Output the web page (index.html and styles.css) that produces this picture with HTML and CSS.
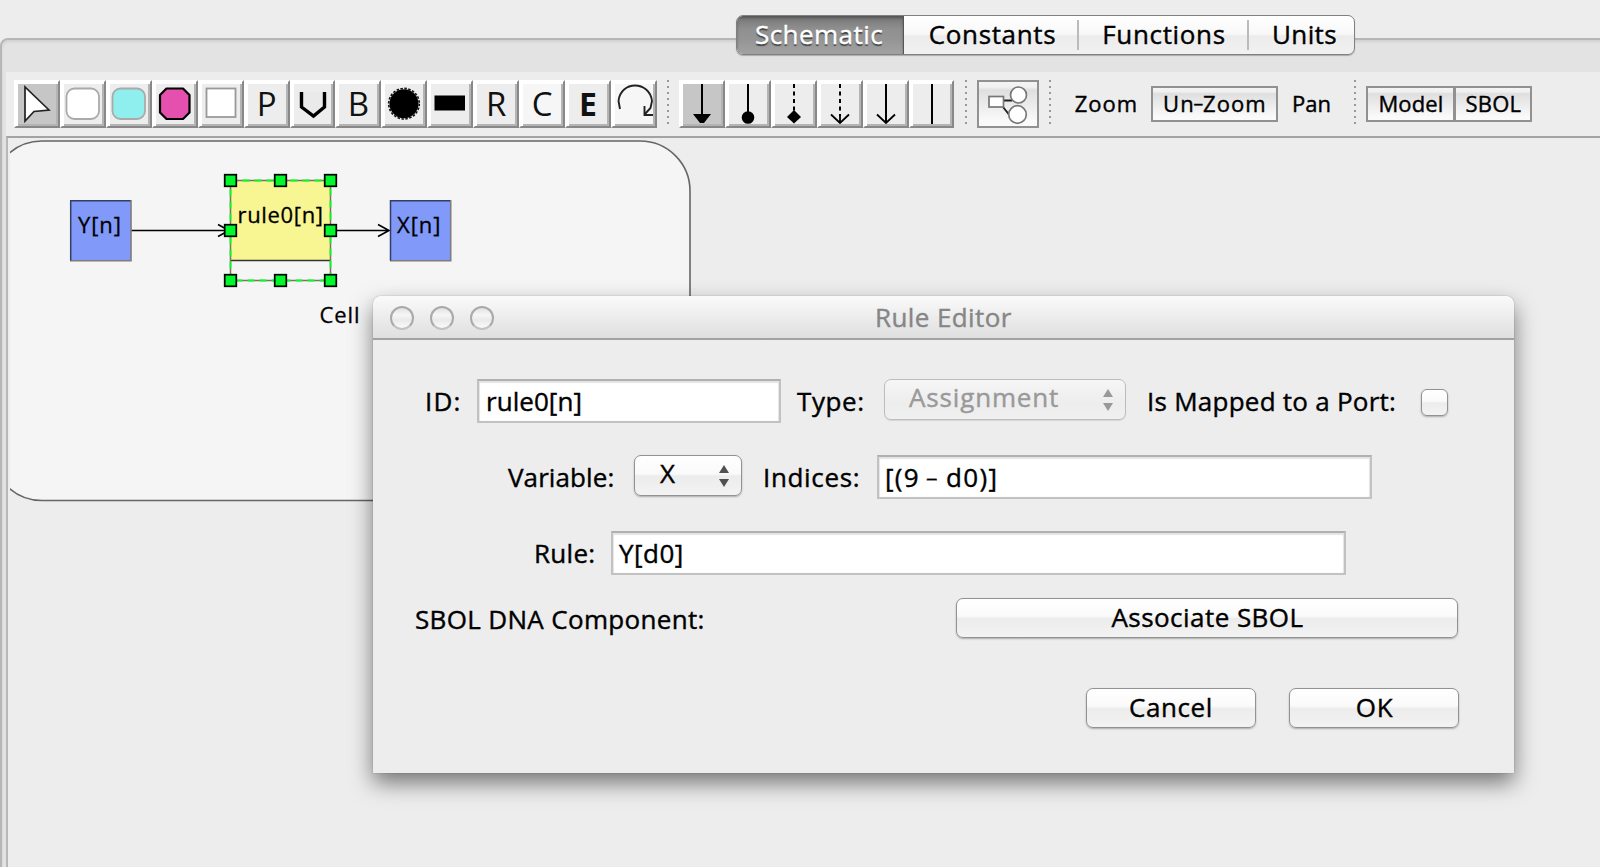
FILE: index.html
```html
<!DOCTYPE html>
<html lang="en">

<head>
  <meta charset="UTF-8" />
  <meta name="viewport" content="width=device-width, initial-scale=1.0" />
  <title>Schematic</title>
  <link rel="stylesheet" href="styles.css">
</head>

<body>

  <!-- Tabs -->
  <nav class="tabs">
    <button class="tab tab-schematic active">Schematic</button>
    <button class="tab tab-constants">Constants</button>
    <button class="tab tab-functions">Functions</button>
    <button class="tab tab-units">Units</button>
  </nav>

  <div class="pane">
    <div class="pane-inner">

      <!-- Toolbar -->
      <div class="toolbar">
        <div class="tool-group">
          <button class="tool selected"><svg viewBox="0 0 38 40"><path d="M7 3V37L16 27.5L31 26Z" fill="#fff" stroke="#222" stroke-width="1.7"/></svg></button>
          <button class="tool"><svg viewBox="0 0 38 40"><rect x="2.500" y="4.500" width="32.500" height="30.500" rx="8" fill="#fff" stroke="#aaa" stroke-width="1.800"/></svg></button>
          <button class="tool"><svg viewBox="0 0 38 40"><rect x="2.500" y="4.500" width="32.500" height="30.500" rx="8" fill="#8eefee" stroke="#aaa" stroke-width="1.800"/></svg></button>
          <button class="tool"><svg viewBox="0 0 38 40"><path d="M10.500 4.500H27L33.500 11V28.500L27 35H10.500L4 28.500V11Z" fill="#e550ae" stroke="#000" stroke-width="2.200" stroke-linejoin="round"/></svg></button>
          <button class="tool"><svg viewBox="0 0 38 40"><rect x="4.500" y="4.500" width="29" height="28.500" fill="#fff" stroke="#999" stroke-width="1.800"/></svg></button>
          <button class="tool letter">P</button>
          <button class="tool"><svg viewBox="0 0 38 40"><path d="M7.500 8V23L19.500 32L30.500 23V8" fill="#eaeaea" stroke="#000" stroke-width="3.400"/></svg></button>
          <button class="tool letter">B</button>
          <button class="tool"><svg viewBox="0 0 38 40"><circle cx="19" cy="19.700" r="14.500"/><circle cx="19" cy="19.700" r="15.300" fill="none" stroke="#111" stroke-width="1.600" stroke-dasharray="2.500 1.500"/></svg></button>
          <button class="tool"><svg viewBox="0 0 38 40"><rect x="3.500" y="11.500" width="30.500" height="15"/></svg></button>
          <button class="tool letter">R</button>
          <button class="tool letter pale">C</button>
          <button class="tool letter bold">E</button>
          <button class="tool pale"><svg viewBox="0 0 38 40"><path d="M5 25L3.500 17C4.500 7 12 1.500 20 1.500S36 7 37 17L35.500 24L29.500 30.500M29.500 22V31H38" fill="none" stroke="#222" stroke-width="1.900"/></svg></button>
        </div>
        <div class="grip"></div>
        <div class="tool-group">
          <button class="tool selected"><svg viewBox="0 0 38 40"><path d="M19 0V32" stroke="#000" stroke-width="2"/><path d="M10 30H28L21 39H17Z"/></svg></button>
          <button class="tool"><svg viewBox="0 0 38 40"><path d="M19 0V32" stroke="#000" stroke-width="2"/><circle cx="19" cy="33.500" r="6.300"/></svg></button>
          <button class="tool"><svg viewBox="0 0 38 40"><path d="M19 0V32" stroke="#000" stroke-width="2" stroke-dasharray="4 3.500"/><path d="M19 26L26 33L19 39.500L12 33Z"/></svg></button>
          <button class="tool"><svg viewBox="0 0 38 40"><path d="M19 0V32" stroke="#000" stroke-width="2" stroke-dasharray="4 3.500"/><path d="M19 30V39M10 30.500L19 39L28 30.500" fill="none" stroke="#000" stroke-width="1.800"/></svg></button>
          <button class="tool"><svg viewBox="0 0 38 40"><path d="M19 0V39" stroke="#000" stroke-width="2"/><path d="M10 30.500L19 39L28 30.500" fill="none" stroke="#000" stroke-width="1.800"/></svg></button>
          <button class="tool"><svg viewBox="0 0 38 40"><path d="M19 0V40" stroke="#000" stroke-width="2"/></svg></button>
        </div>
        <div class="grip grip-modules"></div>
        <button class="flat modules">
          <svg viewBox="0 0 58 44" fill="#fff" stroke="#777" stroke-width="1.700">
            <path d="M25 18.500H33M24 25L30 32.500" stroke="#222" stroke-width="2"/>
            <rect x="10" y="14.500" width="14.500" height="10.500"/>
            <circle cx="39.500" cy="13" r="8"/>
            <circle cx="38.500" cy="32.500" r="8.800"/>
          </svg>
        </button>
        <div class="grip"></div>
        <button class="plain zoom">Zoom</button>
        <button class="flat unzoom">Un<span class="hyphen">-</span>Zoom</button>
        <button class="plain pan">Pan</button>
        <div class="grip"></div>
        <button class="flat model">Model</button>
        <button class="flat sbol">SBOL</button>
      </div>

      <!-- Schematic -->
      <div class="canvas">
        <svg class="graph" viewBox="10 138 1590 729">
          <rect x="-8" y="141" width="698" height="359.500" rx="50" fill="#f5f5f5" stroke="#666" stroke-width="1.600"/>

          <g stroke="#000" stroke-width="1.600" fill="none">
            <path d="M131 230.500H228M218 224.500L229 230.500L218 236.500"/>
            <path d="M331 230.500H389M378 224.500L389 230.500L378 236.500"/>
          </g>

          <g>
            <rect x="70.500" y="200.500" width="60.500" height="60.500" fill="#8199f8"/>
            <path d="M131 200V260.800H70" fill="none" stroke="#807d7b" stroke-width="1.600"/>
            <path d="M130.500 200.700H70.700V260.500" fill="none" stroke="#343c68" stroke-width="1.500"/>
            <text x="78" y="233.300" textLength="43">Y[n]</text>
          </g>
          <g>
            <rect x="390.500" y="200.500" width="60.500" height="60.500" fill="#8199f8"/>
            <path d="M450.700 200V260.800H390" fill="none" stroke="#807d7b" stroke-width="1.600"/>
            <path d="M450 200.700H390.500V260.500" fill="none" stroke="#343c68" stroke-width="1.500"/>
            <text x="397" y="233.300" textLength="43.500">X[n]</text>
          </g>

          <rect x="230.500" y="180.500" width="100" height="80" fill="#f8f593"/>
          <path d="M230 260.600H331" stroke="#333" stroke-width="1.500"/>
          <text x="237.500" y="223.300" textLength="85.500">rule0[n]</text>
          <rect x="230.500" y="180.500" width="100" height="100" fill="none" stroke="#807060" stroke-width="1.500"/>
          <rect x="230.500" y="180.500" width="100" height="100" fill="none" stroke="#00ff20" stroke-width="1.800" stroke-dasharray="7 5"/>

          <!-- Resize handles -->
          <g fill="#00f72c" stroke="#000" stroke-width="1.700">
            <rect x="224.700" y="174.700" width="11.600" height="11.600"/>
            <rect x="274.700" y="174.700" width="11.600" height="11.600"/>
            <rect x="324.700" y="174.700" width="11.600" height="11.600"/>
            <rect x="224.700" y="224.700" width="11.600" height="11.600"/>
            <rect x="324.700" y="224.700" width="11.600" height="11.600"/>
            <rect x="224.700" y="274.700" width="11.600" height="11.600"/>
            <rect x="274.700" y="274.700" width="11.600" height="11.600"/>
            <rect x="324.700" y="274.700" width="11.600" height="11.600"/>
          </g>

          <text x="319.500" y="323.300" textLength="40">Cell</text>
        </svg>
      </div>

    </div>
  </div>

  <!-- Rule editor window -->
  <div class="dialog">
    <div class="titlebar">
      <div class="lights"><i></i><i></i><i></i></div>
      <span class="title">Rule Editor</span>
    </div>
    <div class="form">
      <div class="row row-id">
        <label class="label label-id">ID:</label>
        <div class="field field-id">rule0[n]</div>
        <label class="label label-type">Type:</label>
        <div class="select select-type disabled">
          <span>Assignment</span>
          <svg viewBox="0 0 10 22"><path d="M5 0L10 8H0ZM5 22L10 14H0Z"/></svg>
        </div>
        <label class="label label-port">Is Mapped to a Port:</label>
        <div class="checkbox"></div>
      </div>

      <div class="row row-variable">
        <label class="label label-variable">Variable:</label>
        <div class="select select-variable">
          <span>X</span>
          <svg viewBox="0 0 10 22"><path d="M5 0L10 8H0ZM5 22L10 14H0Z"/></svg>
        </div>
        <label class="label label-indices">Indices:</label>
        <div class="field field-indices">[(9 <span class="hyphen">-</span> d0)]</div>
      </div>

      <div class="row row-rule">
        <label class="label label-rule">Rule:</label>
        <div class="field field-rule">Y[d0]</div>
      </div>

      <div class="row row-sbol">
        <label class="label label-sbol">SBOL DNA Component:</label>
        <button class="btn btn-associate">Associate SBOL</button>
      </div>

      <div class="row row-buttons">
        <button class="btn btn-cancel">Cancel</button>
        <button class="btn btn-ok">OK</button>
      </div>
    </div>
  </div>

</body>

</html>
```
FILE: styles.css
```css
* {
  box-sizing: border-box;
}

body {
  margin: 0;
  width: 1600px;
  height: 867px;
  overflow: hidden;
  background: #ededed;
  color: #000;
  font-family: "Open Sans", "Noto Sans", sans-serif;
  font-size: 26px;
  padding-top: 38px;
  -webkit-text-stroke: 0.4px;
}

button {
  font: inherit;
  color: inherit;
  margin: 0;
  padding: 0;
  border: 0;
  background: none;
  white-space: nowrap;
  flex: none;
}

/* tabs, sitting over the top edge of the pane */
.tabs {
  position: absolute;
  top: 15px;
  left: 736px;
  display: flex;
  width: 619px;
  height: 40px;
  border: 1px solid #808080;
  border-radius: 7px;
  overflow: hidden;
  background: linear-gradient(#fff 0%, #f8f8f8 48%, #ececec 52%, #f1f1f1 100%);
  box-shadow: 0 1px 1px rgba(0, 0, 0, 0.25);
}

.tab {
  height: 38px;
  line-height: 37px;
  padding-bottom: 2px;
}

.tab-schematic {
  width: 167px;
  padding-right: 2px;
  letter-spacing: 0.45px;
}

.tab-constants {
  width: 173px;
  padding-left: 4px;
  letter-spacing: 0.65px;
}

.tab-functions {
  width: 170px;
  padding-left: 4px;
  letter-spacing: 0.65px;
}

.tab-units {
  width: 107px;
  padding-left: 8px;
  letter-spacing: 0.35px;
}

.tab-functions,
.tab-units {
  background: linear-gradient(#bbb, #bbb) 0 4px / 2px 30px no-repeat;
}

.tab.active {
  color: #fff;
  text-shadow: 0 2px 1px #444;
  background: linear-gradient(#757575, #909090 35%, #949494 60%, #a2a2a2);
  border-right: 1px solid #555;
  box-shadow: inset 0 2px 3px rgba(0, 0, 0, 0.3);
}

.pane {
  width: 1620px;
  height: 850px;
  border: 2px solid #b6b6b6;
  border-radius: 8px;
  background: #e3e3e3;
  padding: 32px 0 0 4px;
  box-shadow: inset 0 2px 3px rgba(0, 0, 0, 0.08);
}

.pane-inner {
  background: #ededed;
  height: 100%;
}

/* toolbar */
.toolbar {
  display: flex;
  align-items: flex-start;
  height: 64px;
  padding: 8px 0 0 8px;
  font-size: 22px;
}

.tool-group {
  display: flex;
}

.tool {
  width: 45.93px;
  height: 48px;
  padding: 2px;
  border: 2px solid;
  border-color: #fff #888 #888 #fff;
  box-shadow: inset 2px 2px #fff, inset -2px -2px #b4b4b4;
}

.tool svg {
  display: block;
  width: 38px;
  height: 40px;
}

.tool.selected {
  background: #c6c6c6;
}

.tool.pale {
  background: #f6f6f6;
}

.tool.letter {
  font-size: 33px;
  line-height: 38px;
  color: #111;
  -webkit-text-stroke: 0;
}

.tool.bold {
  font-weight: bold;
  font-size: 32px;
}

.grip {
  width: 2px;
  height: 46px;
  margin: 0 10px;
  background: repeating-linear-gradient(#999 0 2px, transparent 2px 6px);
}

.grip-modules {
  margin-left: 11px;
}

.flat {
  border: 2px solid #919191;
  background: linear-gradient(#f4f4f4 0%, #f0f0f0 12%, #dfdfdf 18%, #fafafa 90%);
}

.modules {
  width: 62px;
  height: 48px;
}

.modules svg {
  display: block;
  width: 58px;
  height: 44px;
}

.plain,
.unzoom,
.model,
.sbol {
  height: 36px;
  line-height: 29px;
  padding-bottom: 2px;
  margin-top: 6px;
}

.zoom {
  width: 90px;
  letter-spacing: 1px;
}

.unzoom {
  width: 127px;
  letter-spacing: 1.1px;
}

/* long, thin hyphen */
.hyphen {
  display: inline-block;
  transform: scale(1.5, 0.8);
}

.pan {
  width: 66px;
}

.model {
  width: 89px;
  letter-spacing: 0.1px;
}

.sbol {
  width: 78px;
  margin-left: -1px;
  letter-spacing: 0.2px;
}

/* canvas */
.canvas {
  height: 740px;
  border-top: 2px solid #a3a3a3;
  border-left: 2px solid #b8b8b8;
  padding-left: 2px;
}

.graph {
  display: block;
  width: 1590px;
  height: 729px;
  font-size: 22px;
}

.graph text {
  stroke: #000;
  stroke-width: 0.3px;
}

/* dialog */
.dialog {
  position: absolute;
  top: 296px;
  left: 373px;
  width: 1141px;
  height: 477px;
  background: #ededed;
  border-radius: 8px 8px 0 0;
  box-shadow: 0 0 1px rgba(0, 0, 0, 0.55), 0 10px 22px rgba(0, 0, 0, 0.5);
}

.titlebar {
  display: flex;
  height: 44px;
  border-bottom: 2px solid #a2a2a2;
  border-radius: 8px 8px 0 0;
  background: linear-gradient(#fafafa, #dfdfdf);
  padding: 10px 0 0 16.5px;
}

.lights {
  display: flex;
  gap: 16px;
  width: 485.5px;
}

.lights i {
  width: 24px;
  height: 24px;
  border: 2px solid #a9a9a9;
  border-bottom-color: #c2c2c2;
  border-radius: 50%;
  background: linear-gradient(#e2e2e2, #f6f6f6 35%, #eaeaea 60%, #fafafa);
}

.title {
  color: #868686;
  line-height: 22px;
  letter-spacing: 0.4px;
}

.row {
  display: flex;
  align-items: flex-start;
}

.row-id {
  padding: 39px 0 0 52px;
  height: 115px;
}

.row-variable {
  padding-left: 135px;
  height: 76px;
}

.row-rule {
  padding-left: 161px;
  height: 67px;
}

.row-sbol {
  padding-left: 42px;
  height: 90px;
}

.row-buttons {
  padding-left: 713px;
  gap: 33px;
}

.label {
  flex: none;
  line-height: 44px;
  white-space: nowrap;
}

.label-id {
  width: 52px;
  letter-spacing: 1.2px;
}

.label-type {
  width: 103px;
  padding-left: 16px;
  letter-spacing: 0.6px;
}

.label-port {
  width: 295px;
  padding-left: 21px;
  letter-spacing: 0.25px;
}

.label-variable {
  width: 126px;
  letter-spacing: 0.1px;
}

.label-indices {
  width: 135px;
  padding-left: 21px;
  letter-spacing: 0.65px;
}

.label-rule {
  width: 77px;
  letter-spacing: 0.3px;
}

.label-sbol {
  width: 541px;
  line-height: 42px;
  letter-spacing: 0.33px;
}

.field {
  height: 44px;
  line-height: 40px;
  padding-left: 6px;
  border: 2px solid #c2c2c2;
  border-top-color: #b0b0b0;
  background: #fff;
  box-shadow: inset 0 2px 1px #e4e4e4, inset 1px 0 1px #e4e4e4, inset -1px 0 1px #e4e4e4;
}

.field-id {
  width: 304px;
  padding-left: 7px;
  letter-spacing: 0.05px;
}

.field-indices {
  width: 495px;
  letter-spacing: 1.35px;
}

.field-rule {
  width: 735px;
  letter-spacing: 0.5px;
}

.select,
.btn,
.checkbox {
  border: 1px solid #929292;
  border-radius: 7px;
  background: linear-gradient(#fff 0%, #fafafa 45%, #ececec 52%, #f3f3f3 100%);
  box-shadow: 0 1px 2px rgba(0, 0, 0, 0.28);
}

.select {
  display: flex;
  justify-content: space-between;
  height: 41px;
  line-height: 35px;
  padding: 0 12px 0 24px;
}

.select svg {
  width: 10px;
  height: 22px;
  margin-top: 9px;
  fill: #505050;
}

.select-type {
  width: 242px;
  letter-spacing: 0.85px;
}

.select.disabled {
  color: #999;
  border-color: #bdbdbd;
  background: linear-gradient(#f6f6f6, #ededed 60%, #f0f0f0);
  box-shadow: 0 1px 1px rgba(0, 0, 0, 0.1);
}

.disabled svg {
  fill: #999;
}

.select-variable {
  width: 108px;
}

.select-variable span {
  padding-left: 1px;
}

.checkbox {
  width: 27px;
  height: 27px;
  margin-top: 10px;
  border-radius: 6px;
}

.btn {
  height: 40px;
  line-height: 35px;
  padding-bottom: 2px;
}

.btn-associate {
  width: 502px;
  padding-left: 1px;
  letter-spacing: 0.45px;
}

.btn-cancel {
  width: 170px;
  letter-spacing: 0.6px;
}

.btn-ok {
  width: 170px;
  padding-left: 1px;
  letter-spacing: 0.6px;
}
```
